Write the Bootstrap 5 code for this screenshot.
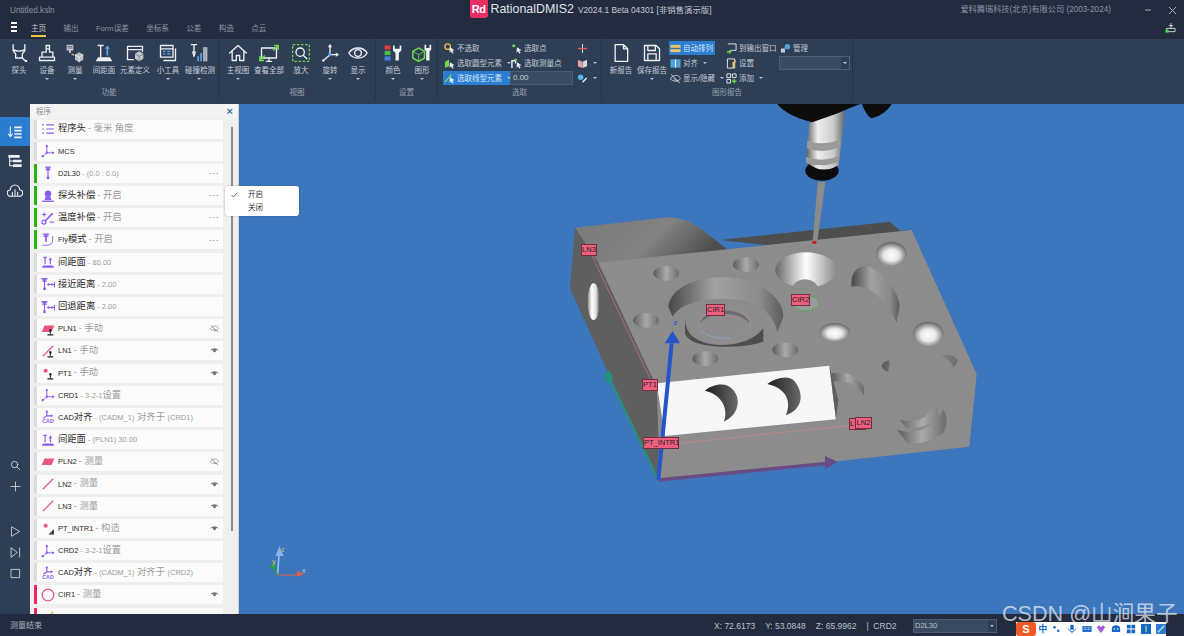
<!DOCTYPE html>
<html lang="zh">
<head>
  <meta charset="UTF-8">
  <title>RationalDMIS2</title>
  <link href="https://cdn.jsdelivr.net/npm/bootstrap@5.3.0/dist/css/bootstrap.min.css" rel="stylesheet">
  <style>
    html, body { height: 100%; overflow: hidden; }
    body { font-family: "Liberation Sans", "Noto Sans CJK SC", sans-serif; font-size: 7.5px; background: #3c76bd; color: #c6ccd5; line-height: 1.2; }
    svg { display: block; }
    .ic { fill: none; stroke: currentColor; stroke-width: 1.6; stroke-linecap: round; stroke-linejoin: round; }

    .app-shell { width: 1184px; height: 636px; }
    .title-bar { height: 39px; background: #232c3f; flex: none; }
    .title-row { height: 18px; }
    .title-side { flex: 1 1 0; }
    .file-name { padding: 6px 0 0 10px; font-size: 8.2px; color: #8d96a5; }
    .brand-box { margin-right: 13px; }
    .brand-logo { width: 18px; height: 18px; background: #ea2f62; border-radius: 0 0 3px 3px; color: #fff; font: 700 11px/18px "Liberation Sans", sans-serif; text-align: center; letter-spacing: -.5px; }
    .brand-name { font-size: 12.4px; color: #dfe3e8; margin-left: 3px; padding-top: 1px; }
    .brand-ver { font-size: 8.400px; color: #c4cad3; margin-left: 4px; padding-top: 2px; }
    .company { font-size: 8.200px; color: #8d96a5; margin-right: 25px; padding-top: 1px; }
    .win-btn { width: 24px; color: #a9b0bb; padding-top: 2px; }
    .tab-row { height: 21px; }
    .burger { width: 6px; margin: 4px 14px 0 11px; }
    .burger i { display: block; height: 2px; background: #fff; margin-bottom: 2px; }
    .tab-item { color: #8d96a5; margin-right: 17.3px; padding-top: 6px; height: 19px; font-size: 7.6px; }
    .tab-item.on { color: #c6ccd5; border-bottom: 2px solid #eec643; }

    .ribbon { height: 65px; background: #2e3f55; flex: none; }
    .rb-group { position: relative; height: 61px; border-right: 1px solid #26344a; flex: none; }
    .rb-title { position: absolute; left: 0; right: 0; bottom: 3px; text-align: center; color: #9aa4b2; }
    .rb-btn { width: 28px; color: #c6ccd5; text-align: center; padding-top: 4px; }
    .rb-btn svg { width: 20px; height: 20px; color: #eef1f4; margin: 0 auto; }
    .rb-btn span { display: block; margin-top: 3px; white-space: nowrap; }
    .rb-btn.w30 { width: 30px; } .rb-btn.w32 { width: 32px; } .rb-btn.w34 { width: 34px; }
    .drop { width: 0; height: 0; border: 2px solid transparent; border-top: 2.5px solid #b9c2ce; border-bottom: 0; display: inline-block; }
    .rb-btn .drop { display: block; margin: 3px auto 0; }
    .mini-col { display: flex; flex-direction: column; padding-top: 2px; }
    .mini-item { display: flex; align-items: center; gap: 2px; height: 14px; margin-bottom: 1px; white-space: nowrap; padding-left: 1px; }
    .mini-item svg { width: 11px; height: 11px; flex: none; }
    .mini-item.hit { background: #2a7dd1; color: #dce9f7; }
    .mini-item .drop { margin-left: 3px; }
    .mini-input { height: 14px; background: #3a4b61; border: 1px solid #4a5a70; color: #c6ccd5; padding: 0 2px; line-height: 12px; font-size: 8px; }
    .mini-combo { height: 14px; width: 71px; background: #3a4b61; border: 1px solid #4e5e74; position: relative; }
    .mini-combo i { position: absolute; right: 0; top: 0; bottom: 0; width: 8px; background: #2e3f55; display: flex; align-items: center; justify-content: center; }

    .work-area { position: relative; min-height: 0; background: #3c76bd; overflow: hidden; }
    .side-rail { width: 30px; background: #2e3f55; padding-top: 13px; flex: none; color: #eef1f4; }
    .rail-btn { height: 30px; display: flex; align-items: center; justify-content: center; }
    .rail-btn.on { background: #2a7dd1; height: 29px; }
    .rail-btn svg { width: 16px; height: 16px; }
    .rail-low { height: 21px; }
    .rail-low svg { width: 11px; height: 11px; }

    .prog-panel { width: 209px; background: #efefef; flex: none; display: flex; flex-direction: column; position: relative; border-right: 1px solid #d0d0d0; }
    .prog-head { height: 15px; flex: none; padding: 3px 6px; color: #8a8a8a; display: flex; justify-content: space-between; background: #f3f3f3; }
    .prog-close { color: #3f72a8; font-size: 11px; line-height: 8px; margin-right: -1px; font-weight: 700; }
    .prog-list { flex: 1; overflow: hidden; padding: .5px 0 0 4px; width: 193px; display: flex; flex-direction: column; gap: 3.2px; }
    .prog-row { height: 19px; flex: none; display: flex; align-items: center; background: #fbfbfb; border-left: 3px solid #dcdcdc; font-size: 9.3px; color: #2b2b2b; white-space: nowrap; }
    .prog-row.ok { border-left-color: #2ab50e; }
    .prog-row.bad { border-left-color: #f5245c; }
    .row-ico { width: 21px; flex: none; display: flex; justify-content: center; color: #8a5cf0; }
    .row-ico svg { width: 14px; height: 14px; }
    .row-ico.geo { color: #e8567e; }
    .lt { font-size: 7.5px; }
    .dim { color: #9c9c9c; margin-left: 2px; }
    .row-act { margin-left: auto; width: 18px; color: #777; display: flex; justify-content: center; font-size: 9px; letter-spacing: .4px; }
    .row-act svg { width: 9px; height: 9px; }
    .prog-thumb { position: absolute; left: 201px; top: 23px; width: 2px; height: 404px; background: #8d8d8d; }

    .ctx-menu { position: absolute; left: 225px; top: 82px; width: 74px; height: 30px; background: #fff; border-radius: 3px; box-shadow: 0 0 2px rgba(0,0,0,.3); color: #333; z-index: 5; padding: 2px 0; }
    .ctx-item { height: 13px; line-height: 13px; padding-left: 23px; position: relative; }
    .ctx-item svg { position: absolute; left: 6px; top: 4px; width: 7px; height: 6px; color: #667; }

    .view-port { flex: 1; position: relative; }
    .view-port > svg { position: absolute; left: 0; top: 0; }
    .feat-tag { position: absolute; background: #f0607e; border: 1px solid #6f3040; color: #222; font-size: 7.5px; line-height: 10px; height: 12px; text-align: center; white-space: nowrap; }

    .status-bar { height: 22px; background: #232c3f; flex: none; padding-left: 10px; position: relative; }
    .status-msg { color: #a9b0bb; font-size: 8px; padding-top: 2px; }
    .status-xyz { position: absolute; left: 714px; top: 7px; color: #b9c0ca; font-size: 8.5px; display: flex; gap: 10px; }
    .status-combo { position: absolute; left: 913px; top: 5px; width: 84px; height: 14px; background: #3a4b61; border: 1px solid #4a5a70; color: #b9c0ca; padding-left: 1px; line-height: 12px; }
    .status-combo i { position: absolute; right: 0; top: 0; bottom: 0; width: 8px; background: #2e3f55; display: flex; align-items: center; justify-content: center; }
    .ime-bar { position: absolute; left: 1016px; top: 8px; width: 150px; height: 14px; background: #fff; display: flex; align-items: center; gap: 4.8px; }
    .ime-logo { width: 20px; height: 14px; background: #f15a22; color: #fff; font: 700 11px/14px "Liberation Sans", sans-serif; text-align: center; border-radius: 3px; margin-right: -2.600px; }
    .ime-zh { color: #1467c8; font-size: 9px; line-height: 11px; font-weight: 700; }
    .ime-bar svg { width: 10px; height: 10px; }
    .mark-text { position: absolute; left: 1002px; top: -8px; font-size: 21.6px; line-height: 16px; color: rgba(235,238,242,.72); white-space: nowrap; z-index: 3; pointer-events: none; }
  </style>
</head>
<body>
<svg width="0" height="0" class="position-absolute">
  <defs>
    <symbol id="i-probe" viewBox="0 0 24 24"><path class="ic" d="M5 2v7l3 4v5h8v-5l3-4V2M5 8c4 2 10 2 14 0M16 18l4 4"/><circle cx="20.5" cy="21.5" r="1.4" fill="currentColor"/></symbol>
    <symbol id="i-machine" viewBox="0 0 24 24"><path class="ic" d="M3 21h18v-4H3zM6 17v-6h5V3h4v8h4v6M11 7h4"/></symbol>
    <symbol id="i-measure" viewBox="0 0 24 24"><path d="M2 2h8v7H7v3H5V9H2z" fill="#c9ced6"/><path d="M3 4h6M3 6h6" stroke="#4b5a70"/><path d="M17 11l5 3v6l-5 3-5-3v-6z" fill="#b9bec6"/><path d="M12 14l5 3 5-3M17 17v6" stroke="#eee" fill="none"/><path d="M8 13l3 2" stroke="#e9c349" stroke-width="1.4"/></symbol>
    <symbol id="i-gap" viewBox="0 0 24 24"><path d="M2 22l3-5h14l3 5z" fill="#eef1f4"/><path class="ic" d="M8 3v14M5 3h6"/><path d="M16 15V6" stroke="#5aa7ff" stroke-width="2"/><path d="M13 7l3-4 3 4z" fill="#5aa7ff"/></symbol>
    <symbol id="i-define" viewBox="0 0 24 24"><path class="ic" d="M10 20H3V4h18v6M3 8h18"/><path d="M17 10l5 3v6l-5 3-5-3v-6z" fill="#c4c9d0"/><path d="M12 13l5 3 5-3M17 16v6" stroke="#777" fill="none"/></symbol>
    <symbol id="i-tool" viewBox="0 0 24 24"><path class="ic" d="M3 3h15v14H3zM3 7h15M21 7v14H7"/><path d="M6 10h3M6 13h3" stroke="#5aa7ff" stroke-width="1.6"/><path d="M11 10h4M11 13h4" stroke="#5aa7ff" stroke-width="1.6"/></symbol>
    <symbol id="i-hit" viewBox="0 0 24 24"><path class="ic" d="M3 2h6M6 2v9M4.500 11h3L6 16z"/><path d="M10 16h2v6h-2zM13.500 12h2v10h-2z" fill="#5aa7ff"/><path d="M17 5h5v17h-5z" fill="#b9bec6"/><path d="M19.500 5v17" stroke="#8b9099"/></symbol>
    <symbol id="i-home" viewBox="0 0 24 24"><path class="ic" d="M2 12L12 3l10 9M5 10v11h5v-6h4v6h5V10"/></symbol>
    <symbol id="i-fit" viewBox="0 0 24 24"><path class="ic" d="M3 6h18v12H3zM9 22h6M12 18v4"/><path d="M1 21l6-6M1 16v5h5M23 3l-6 6M23 8V3h-5" stroke="#6fd64a" stroke-width="2" fill="none"/></symbol>
    <symbol id="i-zoom" viewBox="0 0 24 24"><path d="M2 2h20v20H2z" fill="none" stroke="#6fd64a" stroke-width="1.600" stroke-dasharray="3 2"/><circle cx="11" cy="11" r="5" class="ic"/><path class="ic" d="M15 15l4 4" stroke-width="2.200"/></symbol>
    <symbol id="i-rotate" viewBox="0 0 24 24"><path class="ic" d="M12 14V4M12 14h9M12 14l-8 7"/><path d="M12 1l2.500 4h-5zM23 14l-4 2.500v-5z" fill="currentColor"/><circle cx="12" cy="14" r="2" fill="#5aa7ff"/><circle cx="4" cy="21" r="1.500" fill="currentColor"/></symbol>
    <symbol id="i-show" viewBox="0 0 24 24"><path class="ic" d="M1 12c5-8 17-8 22 0-5 8-17 8-22 0z"/><circle cx="12" cy="12" r="4" class="ic"/></symbol>
    <symbol id="i-color" viewBox="0 0 24 24"><path d="M2 3h7v5H2z" fill="#e53b3b"/><path d="M2 9.500h7v5H2z" fill="#49c04a"/><path d="M2 16h7v5H2z" fill="#3b82e5"/><path d="M12 3v6l3 3v9h4v-9l3-3V3l-2 0v4h-6V3z" fill="#eef1f4"/></symbol>
    <symbol id="i-shape" viewBox="0 0 24 24"><path d="M8 6l7 4v8l-7 4-7-4v-8z" fill="none" stroke="#6fd64a" stroke-width="1.800"/><path d="M1 10l7 4 7-4M8 14v8" stroke="#6fd64a" fill="none"/><path d="M15 2v6l2 2v11h4V10l2-2V2h-2v4h-4V2z" fill="#eef1f4"/></symbol>
    <symbol id="i-doc" viewBox="0 0 24 24"><path class="ic" d="M5 2h10l5 5v15H5zM15 2v5h5"/></symbol>
    <symbol id="i-save" viewBox="0 0 24 24"><path class="ic" d="M3 3h14l4 4v14H3zM7 3v6h9V3M7 21v-8h10v8"/></symbol>
    <symbol id="i-sort" viewBox="0 0 24 24"><path class="ic" d="M5 4v15M2 15l3 4 3-4"/><path d="M11 5h11M11 10h11M11 15h11M11 20h11" stroke="currentColor" stroke-width="2.400"/></symbol>
    <symbol id="i-tree" viewBox="0 0 24 24"><path d="M2 3h17v4H2zM9 10h13v4H9zM9 17h13v4H9z" fill="currentColor"/><path class="ic" d="M4 7v12h5M4 12h5"/></symbol>
    <symbol id="i-cloud" viewBox="0 0 24 24"><path class="ic" d="M6 20a5 5 0 0 1-1-10 7 7 0 0 1 14 0 5 5 0 0 1-1 10zM8 14v6M12 10v10M16 14v6"/></symbol>
    <symbol id="i-search" viewBox="0 0 24 24"><circle cx="10" cy="10" r="7" class="ic" stroke-width="2.600"/><path class="ic" stroke-width="3" d="M15 15l6 6"/></symbol>
    <symbol id="i-plus" viewBox="0 0 24 24"><path class="ic" stroke-width="2.600" d="M12 2v20M2 12h20"/></symbol>
    <symbol id="i-play" viewBox="0 0 24 24"><path class="ic" stroke-width="2.600" d="M4 2l17 10L4 22z"/></symbol>
    <symbol id="i-step" viewBox="0 0 24 24"><path class="ic" stroke-width="2.600" d="M3 2l13 10L3 22zM21 2v20"/></symbol>
    <symbol id="i-stop" viewBox="0 0 24 24"><path class="ic" stroke-width="2.800" d="M3 3h18v18H3z"/></symbol>
    <symbol id="i-list" viewBox="0 0 24 24"><path d="M9 5h13M9 12h13M9 19h13M2 5h3M2 12h3M2 19h3" stroke="currentColor" stroke-width="2"/></symbol>
    <symbol id="i-axes" viewBox="0 0 24 24"><path class="ic" stroke-width="2" d="M10 15V3M10 15h12M10 15l-7 6"/><path d="M10 1l2.500 4h-5zM23 15l-4 2.500v-5z" fill="currentColor"/><circle cx="3" cy="21" r="2" fill="currentColor"/><circle cx="10" cy="15" r="2" fill="currentColor"/></symbol>
    <symbol id="i-stylus" viewBox="0 0 24 24"><path d="M7 2h10M8 6h8" stroke="currentColor" stroke-width="2.200"/><path d="M9 3l2 5v11h2V8l2-5z" fill="currentColor"/><circle cx="12" cy="20.500" r="2.400" fill="currentColor"/></symbol>
    <symbol id="i-comp" viewBox="0 0 24 24"><circle cx="12" cy="8" r="5.500" fill="currentColor"/><path d="M6 19l2-6h8l2 6z" fill="currentColor"/><path d="M2 21h20" stroke="currentColor" stroke-width="2.400"/></symbol>
    <symbol id="i-temp" viewBox="0 0 24 24"><path d="M6 18L20 4" stroke="currentColor" stroke-width="3"/><circle cx="5" cy="19" r="3.500" fill="none" stroke="currentColor" stroke-width="2"/><path d="M2 6h7M5.500 2.500v7M15 19h7" stroke="currentColor" stroke-width="2"/></symbol>
    <symbol id="i-fly" viewBox="0 0 24 24"><path d="M3 2h11M4 5.500h9" stroke="currentColor" stroke-width="2"/><path d="M5 3l2 4v8h3V7l2-4z" fill="currentColor"/><path class="ic" stroke-width="2" d="M20 6v6c0 6-4 9-10 9H3"/></symbol>
    <symbol id="i-gap2" viewBox="0 0 24 24"><path d="M1 22l3-4h16l3 4z" fill="currentColor"/><path d="M7 16V5M4 4h6" stroke="currentColor" stroke-width="2"/><path d="M16 16V8" stroke="currentColor" stroke-width="2"/><path d="M13 9l3-5 3 5z" fill="currentColor"/></symbol>
    <symbol id="i-approach" viewBox="0 0 24 24"><path d="M1 3h10M2 7h8" stroke="currentColor" stroke-width="2.200"/><path d="M3 3l2 5v11h2V8l2-5z" fill="currentColor"/><circle cx="6" cy="20.500" r="2.400" fill="currentColor"/><path d="M11 13h11M23 8v10" stroke="currentColor" stroke-width="1.800"/><path d="M10 13l4-3v6zM22 13l-4-3v6z" fill="currentColor"/></symbol>
    <symbol id="i-plane" viewBox="0 0 24 24"><path d="M6 6h17l-5 11H1z" fill="currentColor"/></symbol>
    <symbol id="i-line" viewBox="0 0 24 24"><path d="M3 21L21 3" stroke="currentColor" stroke-width="2"/></symbol>
    <symbol id="i-pt" viewBox="0 0 24 24"><circle cx="8" cy="8" r="3.500" fill="currentColor"/></symbol>
    <symbol id="i-circle" viewBox="0 0 24 24"><circle cx="12" cy="12" r="10" fill="none" stroke="currentColor" stroke-width="2.200"/></symbol>
    <symbol id="i-manual" viewBox="0 0 24 24"><path d="M15 15h2v5h-2zM11 21h10v2H11z" fill="#222"/><circle cx="16" cy="14" r="2" fill="#222"/></symbol>
    <symbol id="i-build" viewBox="0 0 24 24"><path d="M22 14v9H13z" fill="#222"/><path d="M19 19v2h-2z" fill="#fff"/></symbol>
    <symbol id="i-cad" viewBox="0 0 24 24"><path d="M10 10V2M10 10h9M10 10l-6 4" stroke="currentColor" stroke-width="2" fill="none"/><path d="M10 0l2.500 4h-5zM21 10l-4 2.500v-5z" fill="currentColor"/></symbol>
    <symbol id="i-eye" viewBox="0 0 24 24"><path d="M1 12c5-8 17-8 22 0-3 0-5-1-6-2a5 5 0 0 1-10 0c-1 1-3 2-6 2z" fill="currentColor"/><circle cx="12" cy="13" r="3.500" fill="currentColor"/></symbol>
    <symbol id="i-eyeoff" viewBox="0 0 24 24"><path class="ic" d="M1 12c5-7 13-8 18-5l4 5c-5 7-14 7-18 4zM3 4l18 17M9 12l6 6"/></symbol>
    <symbol id="i-sel" viewBox="0 0 24 24"><path d="M13 9l10 7-5 1 3 5-3 1-3-5-3 3z" fill="#eef1f4"/></symbol>
  </defs>
</svg>

<div class="app-shell d-flex flex-column">
  <!-- title + tabs -->
  <header class="title-bar">
    <div class="title-row d-flex">
      <div class="file-name title-side">Untitled.ksln</div>
      <div class="brand-box d-flex align-items-center">
        <div class="brand-logo">Rd</div>
        <div class="brand-name">RationalDMIS2</div>
        <div class="brand-ver">V2024.1 Beta 04301 [非销售演示版]</div>
      </div>
      <div class="title-side d-flex justify-content-end align-items-center">
        <div class="company">爱科腾瑞科技(北京)有限公司 (2003-2024)</div>
        <div class="win-btn"><svg width="8" height="8" viewBox="0 0 8 8" class="mx-auto"><path d="M1 4h6" stroke="currentColor"/></svg></div>
        <div class="win-btn"><svg width="9" height="9" viewBox="0 0 9 9" class="mx-auto"><path d="M1 1l7 7M8 1L1 8" stroke="currentColor"/></svg></div>
      </div>
    </div>
    <div class="tab-row d-flex">
      <div class="burger"><i></i><i></i><i></i></div>
      <div class="tab-item on">主页</div>
      <div class="tab-item">输出</div>
      <div class="tab-item">Form误差</div>
      <div class="tab-item">坐标系</div>
      <div class="tab-item">公差</div>
      <div class="tab-item">构造</div>
      <div class="tab-item">点云</div>
      <div class="ms-auto me-2 pt-1 text-white"><svg width="11" height="11" viewBox="0 0 24 24"><path class="ic" d="M4 21h18v-7H4zM13 14V3M9 8h8"/><path d="M1 17h7v6H1z" fill="#3fe03f"/></svg></div>
    </div>
  </header>

  <!-- ribbon -->
  <section class="ribbon d-flex">
    <div class="rb-group d-flex" style="width:219px;padding-left:5px">
      <div class="rb-btn"><svg><use href="#i-probe"/></svg><span>探头</span></div>
      <div class="rb-btn"><svg><use href="#i-machine"/></svg><span>设备</span><i class="drop"></i></div>
      <div class="rb-btn"><svg><use href="#i-measure"/></svg><span>测量</span><i class="drop"></i></div>
      <div class="rb-btn w30"><svg><use href="#i-gap"/></svg><span>间距面</span></div>
      <div class="rb-btn w32"><svg><use href="#i-define"/></svg><span>元素定义</span></div>
      <div class="rb-btn w34"><svg><use href="#i-tool"/></svg><span>小工具</span><i class="drop"></i></div>
      <div class="rb-btn"><svg><use href="#i-hit"/></svg><span>碰撞检测</span><i class="drop"></i></div>
      <div class="rb-title">功能</div>
    </div>
    <div class="rb-group d-flex" style="width:157px;padding-left:5px">
      <div class="rb-btn"><svg><use href="#i-home"/></svg><span>主视图</span><i class="drop"></i></div>
      <div class="rb-btn w34"><svg><use href="#i-fit"/></svg><span>查看全部</span></div>
      <div class="rb-btn w30"><svg><use href="#i-zoom"/></svg><span>放大</span></div>
      <div class="rb-btn"><svg><use href="#i-rotate"/></svg><span>旋转</span><i class="drop"></i></div>
      <div class="rb-btn"><svg><use href="#i-show"/></svg><span>显示</span><i class="drop"></i></div>
      <div class="rb-title">视图</div>
    </div>
    <div class="rb-group d-flex" style="width:62px;padding-left:3px">
      <div class="rb-btn"><svg><use href="#i-color"/></svg><span>颜色</span><i class="drop"></i></div>
      <div class="rb-btn w30"><svg><use href="#i-shape"/></svg><span>图形</span><i class="drop"></i></div>
      <div class="rb-title">设置</div>
    </div>
    <div class="rb-group d-flex" style="width:164px;padding-left:5px">
      <div class="mini-col" style="width:67px">
        <div class="mini-item"><svg viewBox="0 0 24 24"><circle cx="8" cy="8" r="6" fill="none" stroke="#e9b949" stroke-width="3"/><use href="#i-sel"/></svg>不选取</div>
        <div class="mini-item"><svg viewBox="0 0 24 24"><path d="M2 8l9-5v15l-9 4z" fill="#6fd64a"/><use href="#i-sel"/></svg>选取圆型元素<i class="drop"></i></div>
        <div class="mini-item hit"><svg viewBox="0 0 24 24"><path d="M2 20L16 4" stroke="#7fe05a" stroke-width="3"/><use href="#i-sel"/></svg>选取线型元素<i class="drop"></i></div>
      </div>
      <div class="mini-col" style="width:64px">
        <div class="mini-item"><svg viewBox="0 0 24 24"><circle cx="6" cy="6" r="3.500" fill="#6fd64a"/><use href="#i-sel"/></svg>选取点</div>
        <div class="mini-item"><svg viewBox="0 0 24 24"><path d="M2 22V6h8v6" fill="none" stroke="#eef1f4" stroke-width="3"/><circle cx="10" cy="4" r="3" fill="#6fd64a"/><use href="#i-sel"/></svg>选取测量点</div>
        <div class="mini-input">0.00</div>
      </div>
      <div class="mini-col" style="width:28px;padding-left:3px">
        <div class="mini-item"><svg viewBox="0 0 24 24"><path d="M12 2v20" stroke="#e9e9e9" stroke-width="2"/><path d="M2 12h20" stroke="#e85a5a" stroke-width="3"/></svg></div>
        <div class="mini-item"><svg viewBox="0 0 24 24"><path d="M2 4l9 4v14l-9-4z" fill="#e9a0a0"/><path d="M12 8l10-4v14l-10 4z" fill="#d6dae0"/></svg><i class="drop"></i></div>
        <div class="mini-item"><svg viewBox="0 0 24 24"><circle cx="8" cy="9" r="6" fill="#4fb7ea"/><path d="M12 20l9-9" stroke="#eef1f4" stroke-width="3"/></svg><i class="drop"></i></div>
      </div>
      <div class="rb-title">选取</div>
    </div>
    <div class="rb-group d-flex" style="width:251px;padding-left:5px">
      <div class="rb-btn"><svg><use href="#i-doc"/></svg><span>新报告</span></div>
      <div class="rb-btn w34"><svg><use href="#i-save"/></svg><span>保存报告</span><i class="drop"></i></div>
      <div class="mini-col" style="width:56px">
        <div class="mini-item hit" style="width:46px"><svg viewBox="0 0 24 24"><path d="M1 4h22v16H1z" fill="#e9c66a"/><path d="M1 12h22" stroke="#3b6ea8" stroke-width="3"/></svg>自动排列</div>
        <div class="mini-item"><svg viewBox="0 0 24 24"><path d="M1 3h22v18H1z" fill="#4fa3d9"/><path d="M12 3v18" stroke="#fff" stroke-width="2"/></svg>对齐<i class="drop"></i></div>
        <div class="mini-item"><svg viewBox="0 0 24 24"><use href="#i-eyeoff" color="#eef1f4"/></svg>显示/隐藏<i class="drop"></i></div>
      </div>
      <div class="mini-col" style="width:54px">
        <div class="mini-item"><svg viewBox="0 0 24 24"><path d="M4 2h18v14H10" fill="none" stroke="#eef1f4" stroke-width="2"/><path d="M2 19h10M8 15v8" stroke="#6fd64a" stroke-width="3"/></svg>到输出窗口</div>
        <div class="mini-item"><svg viewBox="0 0 24 24"><path d="M3 2h16v20H3z" fill="none" stroke="#eef1f4" stroke-width="2"/><path d="M14 12v10h4V12l3-3V5h-2v3h-5" fill="#e9c349"/></svg>设置</div>
        <div class="mini-item"><svg viewBox="0 0 24 24"><path d="M2 2h8v8H2zM14 2h8v8h-8zM2 14h8v8H2z" fill="none" stroke="#eef1f4" stroke-width="2"/><path d="M18 13v10M13 18h10" stroke="#6fd64a" stroke-width="3"/></svg>添加<i class="drop"></i></div>
      </div>
      <div class="mini-col" style="width:72px">
        <div class="mini-item"><svg viewBox="0 0 24 24"><path d="M2 12h9v9H2z" fill="#c4c9d0"/><circle cx="16" cy="8" r="6" fill="#4fa3d9"/></svg>管理</div>
        <div class="mini-combo"><i><b class="drop"></b></i></div>
      </div>
      <div class="rb-title">图形报告</div>
    </div>
  </section>

  <!-- work area -->
  <main class="work-area d-flex flex-grow-1">
    <nav class="side-rail d-flex flex-column">
      <div class="rail-btn on"><svg><use href="#i-sort"/></svg></div>
      <div class="rail-btn"><svg><use href="#i-tree"/></svg></div>
      <div class="rail-btn"><svg><use href="#i-cloud"/></svg></div>
      <div class="mt-auto rail-btn rail-low"><svg><use href="#i-search"/></svg></div>
      <div class="rail-btn rail-low mb-4"><svg><use href="#i-plus"/></svg></div>
      <div class="rail-btn rail-low"><svg><use href="#i-play"/></svg></div>
      <div class="rail-btn rail-low"><svg><use href="#i-step"/></svg></div>
      <div class="rail-btn rail-low" style="margin-bottom:30px"><svg><use href="#i-stop"/></svg></div>
    </nav>

    <aside class="prog-panel">
      <div class="prog-head"><span>程序</span><span class="prog-close">×</span></div>
      <div class="prog-list">
        <div class="prog-row"><div class="row-ico"><svg><use href="#i-list"/></svg></div>程序头<span class="dim">- 毫米 角度</span></div>
        <div class="prog-row"><div class="row-ico"><svg><use href="#i-axes"/></svg></div><span class="lt">MCS</span></div>
        <div class="prog-row ok"><div class="row-ico"><svg><use href="#i-stylus"/></svg></div><span class="lt">D2L30</span><span class="dim lt">- (0.0 : 0.0)</span><div class="row-act">···</div></div>
        <div class="prog-row ok"><div class="row-ico"><svg><use href="#i-comp"/></svg></div>探头补偿<span class="dim">- 开启</span><div class="row-act">···</div></div>
        <div class="prog-row ok"><div class="row-ico"><svg><use href="#i-temp"/></svg></div>温度补偿<span class="dim">- 开启</span><div class="row-act">···</div></div>
        <div class="prog-row ok"><div class="row-ico"><svg><use href="#i-fly"/></svg></div><span class="lt">Fly</span>模式<span class="dim">- 开启</span><div class="row-act">···</div></div>
        <div class="prog-row"><div class="row-ico"><svg><use href="#i-gap2"/></svg></div>间距面<span class="dim lt">- 80.00</span></div>
        <div class="prog-row"><div class="row-ico"><svg><use href="#i-approach"/></svg></div>接近距离<span class="dim lt">- 2.00</span></div>
        <div class="prog-row"><div class="row-ico"><svg><use href="#i-approach"/></svg></div>回退距离<span class="dim lt">- 2.00</span></div>
        <div class="prog-row"><div class="row-ico geo"><svg viewBox="0 0 24 24"><use href="#i-plane"/><use href="#i-manual"/></svg></div><span class="lt">PLN1</span><span class="dim">- 手动</span><div class="row-act"><svg><use href="#i-eyeoff"/></svg></div></div>
        <div class="prog-row"><div class="row-ico geo"><svg viewBox="0 0 24 24"><use href="#i-line"/><use href="#i-manual"/></svg></div><span class="lt">LN1</span><span class="dim">- 手动</span><div class="row-act"><svg><use href="#i-eye"/></svg></div></div>
        <div class="prog-row"><div class="row-ico geo"><svg viewBox="0 0 24 24"><use href="#i-pt"/><use href="#i-manual"/></svg></div><span class="lt">PT1</span><span class="dim">- 手动</span><div class="row-act"><svg><use href="#i-eye"/></svg></div></div>
        <div class="prog-row"><div class="row-ico"><svg><use href="#i-axes"/></svg></div><span class="lt">CRD1</span><span class="dim"><span class="lt">- 3-2-1</span>设置</span></div>
        <div class="prog-row"><div class="row-ico"><svg viewBox="0 0 24 24"><use href="#i-cad"/><text x="12" y="23" font-size="9" font-weight="700" text-anchor="middle" fill="currentColor">CAD</text></svg></div><span class="lt">CAD</span>对齐<span class="dim"><span class="lt">- (CADM_1)</span> 对齐于 <span class="lt">(CRD1)</span></span></div>
        <div class="prog-row"><div class="row-ico"><svg><use href="#i-gap2"/></svg></div>间距面<span class="dim lt">- (PLN1) 30.00</span></div>
        <div class="prog-row"><div class="row-ico geo"><svg><use href="#i-plane"/></svg></div><span class="lt">PLN2</span><span class="dim">- 测量</span><div class="row-act"><svg><use href="#i-eyeoff"/></svg></div></div>
        <div class="prog-row"><div class="row-ico geo"><svg><use href="#i-line"/></svg></div><span class="lt">LN2</span><span class="dim">- 测量</span><div class="row-act"><svg><use href="#i-eye"/></svg></div></div>
        <div class="prog-row"><div class="row-ico geo"><svg><use href="#i-line"/></svg></div><span class="lt">LN3</span><span class="dim">- 测量</span><div class="row-act"><svg><use href="#i-eye"/></svg></div></div>
        <div class="prog-row"><div class="row-ico geo"><svg viewBox="0 0 24 24"><use href="#i-pt"/><use href="#i-build"/></svg></div><span class="lt">PT_INTR1</span><span class="dim">- 构造</span><div class="row-act"><svg><use href="#i-eye"/></svg></div></div>
        <div class="prog-row"><div class="row-ico"><svg><use href="#i-axes"/></svg></div><span class="lt">CRD2</span><span class="dim"><span class="lt">- 3-2-1</span>设置</span></div>
        <div class="prog-row"><div class="row-ico"><svg viewBox="0 0 24 24"><use href="#i-cad"/><text x="12" y="23" font-size="9" font-weight="700" text-anchor="middle" fill="currentColor">CAD</text></svg></div><span class="lt">CAD</span>对齐<span class="dim"><span class="lt">- (CADM_1)</span> 对齐于 <span class="lt">(CRD2)</span></span></div>
        <div class="prog-row bad"><div class="row-ico geo"><svg><use href="#i-circle"/></svg></div><span class="lt">CIR1</span><span class="dim">- 测量</span><div class="row-act"><svg><use href="#i-eye"/></svg></div></div>
        <div class="prog-row bad"><div class="row-ico" style="color:#e0a93b"><svg><use href="#i-line"/></svg></div></div>
      </div>
      <div class="prog-thumb"></div>
    </aside>

    <!-- 3D view: free canvas, part drawn in screen coords -->
    <div class="view-port">
      <svg width="945" height="510" viewBox="239 104 945 510">
        <defs>
          <linearGradient id="g-hole" x1="0" y1="0" x2="1" y2="0"><stop offset="0" stop-color="#5c5c5c"/><stop offset=".5" stop-color="#aaa"/><stop offset="1" stop-color="#6c6c6c"/></linearGradient>
          <linearGradient id="g-bore" x1="0" y1="0" x2="1" y2="0"><stop offset="0" stop-color="#484848"/><stop offset=".4" stop-color="#a2a2a2"/><stop offset=".8" stop-color="#8a8a8a"/><stop offset="1" stop-color="#5c5c5c"/></linearGradient>
          <linearGradient id="g-cone" x1="0" y1="0" x2="1" y2="0"><stop offset="0" stop-color="#666"/><stop offset=".5" stop-color="#fff"/><stop offset="1" stop-color="#888"/></linearGradient>
          <radialGradient id="g-dome" cx=".5" cy=".55" r=".55"><stop offset="0" stop-color="#fff"/><stop offset=".45" stop-color="#e8e8e8"/><stop offset="1" stop-color="#5f5f5f"/></radialGradient>
          <linearGradient id="g-cres" x1="0" y1="0" x2="1" y2="0"><stop offset="0" stop-color="#1c1c1c"/><stop offset="1" stop-color="#6a6a6a"/></linearGradient>
          <linearGradient id="g-side" x1="0" y1="0" x2="1" y2=".3"><stop offset="0" stop-color="#7a7a7a"/><stop offset=".6" stop-color="#828282"/><stop offset="1" stop-color="#4f4f4f"/></linearGradient>
          <linearGradient id="g-shaft" x1="0" y1="0" x2="1" y2="0"><stop offset="0" stop-color="#5a5a5a"/><stop offset=".3" stop-color="#eee"/><stop offset=".7" stop-color="#ccc"/><stop offset="1" stop-color="#666"/></linearGradient>
          <linearGradient id="g-hl" x1="0" y1="0" x2="1" y2="0"><stop offset="0" stop-color="#8a8a8a"/><stop offset=".35" stop-color="#fff"/><stop offset=".7" stop-color="#ddd"/><stop offset="1" stop-color="#555"/></linearGradient>
        </defs>
        <g transform="translate(560,100) scale(.33333)">
          <!-- back strip + raised boss -->
          <path d="M480 420L990 365l30 27 35-2-300 60z" fill="#4e4e4e"/>
          <path d="M45 383L320 352Q380 352 420 385L505 450 115 490z" fill="url(#g-side)"/>
          <!-- dark left side -->
          <path d="M45 383L30 565 290 1140 300 1000 290 860 115 488z" fill="#5f5f5f"/>
          <!-- top + front -->
          <path d="M115 488L1055 390 1250 822 1228 1040 300 1142 290 860z" fill="#8c8c8c"/>
          <ellipse cx="101" cy="605" rx="18" ry="55" fill="url(#g-hl)"/>
          <!-- small holes -->
          <ellipse cx="319" cy="520" rx="39" ry="22" fill="url(#g-hole)"/>
          <ellipse cx="558" cy="494" rx="39" ry="22" fill="url(#g-hole)"/>
          <ellipse cx="258" cy="661" rx="39" ry="22" fill="url(#g-hole)"/>
          <ellipse cx="436" cy="776" rx="39" ry="22" fill="url(#g-hole)"/>
          <ellipse cx="676" cy="750" rx="39" ry="22" fill="url(#g-hole)"/>
          <!-- countersink -->
          <ellipse cx="738" cy="510" rx="92" ry="53" fill="url(#g-cone)"/>
          <path d="M697 566a38 28 0 0 1 76 0z" fill="#8e8e8e"/>
          <!-- big counterbore -->
          <path d="M325 620C335 555 420 530 500 532 590 534 670 590 670 650L652 697C640 625 570 598 490 596 420 596 360 612 338 650z" fill="url(#g-bore)"/>
          <path d="M375 655Q375 730 480 735 570 735 610 685V725Q560 742 480 740 385 735 375 700z" fill="#4e4e4e"/>
          <ellipse cx="495" cy="670" rx="76" ry="46" fill="#8c8c8c" stroke="#a0a0a0"/>
          <path d="M419 670a76 46 0 0 1 150 0Q540 640 490 642 440 645 419 670z" fill="#6d6d6d"/>
          <path d="M420 690Q440 715 510 715" stroke="#7fb0ff" stroke-dasharray="6 3" stroke-width="2" fill="none"/>
          <!-- curved slot -->
          <path d="M875 560C870 510 900 495 925 498 990 530 1025 600 1018 625L1010 668C985 610 930 550 875 560z" fill="url(#g-bore)"/>
          <!-- domes -->
          <ellipse cx="994" cy="462" rx="46" ry="36" fill="url(#g-dome)"/>
          <ellipse cx="824" cy="697" rx="46" ry="28" fill="url(#g-dome)"/>
          <ellipse cx="1105" cy="702" rx="46" ry="37" fill="url(#g-dome)"/>
          <!-- small arcs lower right -->
          <path d="M965 797Q975 780 990 782L985 815Q968 812 965 797zM1140 768Q1170 755 1193 780 1190 795 1180 803 1170 775 1140 768z" fill="url(#g-hole)"/>
          <path d="M815 820Q880 810 912 860V885Q870 835 820 845z" fill="url(#g-hole)"/>
          <path d="M1020 960Q1100 975 1122 912 1140 925 1132 955 1090 990 1040 985zM1012 990Q1100 1015 1150 928 1170 960 1150 1000 1090 1040 1040 1028z" fill="url(#g-hole)"/>
          <!-- white face with crescents -->
          <path d="M290 850L808 797 828 958 315 1008z" fill="#f7f7f7"/>
          <path d="M808 797L835 900 828 958z" fill="#5f5f5f"/>
          <path d="M435 872C460 850 500 845 520 870 545 900 535 945 492 965 505 930 490 885 435 872z" fill="url(#g-cres)"/>
          <path d="M622 852C650 830 690 825 705 845 735 885 725 930 678 945 695 905 680 865 622 852z" fill="url(#g-cres)"/>
          <!-- measured features -->
          <path d="M95 465L270 835" stroke="#e8707f" stroke-width="2" fill="none"/>
          <path d="M358 1030L880 975" stroke="#ef7d8a" stroke-width="2" stroke-dasharray="10 3" fill="none"/>
          <path d="M420 645Q480 635 560 665" stroke="#e8707f" stroke-dasharray="5 3" stroke-width="2" fill="none"/>
          <ellipse cx="738" cy="610" rx="38" ry="22" fill="#9a9a9a" stroke="#2bc22b" stroke-width="2.500" stroke-dasharray="6 3"/>
          <!-- part axes -->
          <path d="M295 1140L145 828" stroke="#26907e" stroke-width="7" fill="none"/>
          <ellipse cx="145" cy="830" rx="12" ry="17" fill="#26907e"/>
          <path d="M295 1140L800 1090" stroke="#6b4a86" stroke-width="10" fill="none"/>
          <path d="M795 1068L832 1085 795 1108z" fill="#6b4a86"/>
          <path d="M295 1140L335 730" stroke="#2456c9" stroke-width="12" fill="none"/>
          <path d="M338 693L360 730 314 730z" fill="#2456c9"/>
          <text x="340" y="674" font-size="24" font-weight="700" fill="#3a60d8">z</text>
          <!-- probe -->
          <path d="M650 10Q680 50 770 70L850 32 905 10z" fill="#0c0c0c"/>
          <path d="M905 10Q920 50 935 55 975 45 997 10z" fill="#0c0c0c"/>
          <ellipse cx="786" cy="212" rx="50" ry="30" fill="#0c0c0c"/>
          <path d="M748 70L855 32 836 196Q785 226 738 186z" fill="url(#g-shaft)"/>
          <path d="M742 122Q790 140 842 118L840 142Q790 162 741 145zM738 170Q790 190 838 166L836 185Q785 205 738 188z" fill="#9a9a9a"/>
          <path d="M773 245L796 245 772 425 758 425z" fill="#8b8b8b"/>
          <ellipse cx="763" cy="427" rx="7" ry="5" fill="#d01818"/>
        </g>
        <!-- corner triad -->
        <path d="M277.500 575L279 556" stroke="#a8c3f0" stroke-width="1.500"/>
        <path d="M279.500 546l4 10h-8z" fill="#8fb3ec"/>
        <path d="M277.500 575H298" stroke="#e2603a"/>
        <path d="M304 574l-7 3v-6z" fill="#e2603a"/>
        <path d="M277.500 575l-4-8" stroke="#23a53a" stroke-width="1.500"/>
        <circle cx="273" cy="566.500" r="2.500" fill="#23a53a"/>
        <text x="281" y="552" font-size="7" fill="#d6c34a">z</text>
        <text x="272" y="564" font-size="7" fill="#d6c34a">y</text>
        <text x="302" y="573" font-size="7" fill="#b9c6d8">x</text>
      </svg>
      <div class="feat-tag" style="left:342px;top:140px;width:16px">LN3</div>
      <div class="feat-tag" style="left:467px;top:200px;width:19px">CIR1</div>
      <div class="feat-tag" style="left:552px;top:190px;width:19px">CIR2</div>
      <div class="feat-tag" style="left:403px;top:275px;width:16px">PT1</div>
      <div class="feat-tag" style="left:404px;top:333px;width:36px">PT_INTR1</div>
      <div class="feat-tag text-start" style="left:610px;top:314px;width:17px">L</div>
      <div class="feat-tag" style="left:616px;top:313px;width:17px">LN2</div>
    </div>

    <div class="ctx-menu">
      <div class="ctx-item"><svg viewBox="0 0 7 6"><path d="M.5 3l2 2 4-4.500" fill="none" stroke="currentColor"/></svg>开启</div>
      <div class="ctx-item">关闭</div>
    </div>
  </main>

  <!-- status -->
  <footer class="status-bar d-flex align-items-center">
    <div class="status-msg">测量结束</div>
    <div class="status-xyz"><span>X: 72.6173</span><span>Y: 53.0848</span><span>Z: 65.9962</span><span>|&nbsp; CRD2</span></div>
    <div class="status-combo">D2L30<i><b class="drop"></b></i></div>
    <div class="mark-text">CSDN @山涧果子</div>
    <div class="ime-bar">
      <div class="ime-logo">S</div>
      <span class="ime-zh">中</span>
      <svg viewBox="0 0 24 24"><circle cx="6" cy="8" r="3" fill="#1467c8"/><circle cx="15" cy="16" r="3" fill="#1467c8"/></svg>
      <svg viewBox="0 0 24 24"><path d="M8 2h8v12H8z" fill="#1467c8"/><path d="M4 11c0 10 16 10 16 0M12 18v5" fill="none" stroke="#1467c8" stroke-width="2"/></svg>
      <svg viewBox="0 0 24 24"><path d="M1 5h22v14H1z" fill="#1467c8"/><path d="M4 9h16M4 13h16" stroke="#fff" stroke-dasharray="2 1.500" stroke-width="2"/></svg>
      <svg viewBox="0 0 24 24"><path d="M12 22L2 8l5-5 5 5 5-5 5 5z" fill="#a55ae0"/></svg>
      <svg viewBox="0 0 24 24"><path d="M2 12a10 9 0 0 1 20 0v7H2z" fill="#1467c8"/><circle cx="8" cy="12" r="2" fill="#fff"/><circle cx="16" cy="12" r="2" fill="#fff"/></svg>
      <svg viewBox="0 0 24 24"><path d="M2 2h9v9H2zM13 2h9v9h-9zM2 13h9v9H2zM13 13h9v9h-9z" fill="#1467c8"/></svg>
      <svg viewBox="0 0 24 24"><path d="M0 0h24v24H0z" fill="#1467c8"/><path d="M12 4v16" stroke="#9fe07a" stroke-width="3"/></svg>
      <svg viewBox="0 0 24 24"><path d="M0 0h24v24H0z" fill="#2a7dd1"/><path d="M4 20L20 4" stroke="#cfeee0" stroke-width="3"/></svg>
    </div>
  </footer>
</div>
<script src="https://cdn.jsdelivr.net/npm/bootstrap@5.3.0/dist/js/bootstrap.bundle.min.js"></script>
</body>
</html>
